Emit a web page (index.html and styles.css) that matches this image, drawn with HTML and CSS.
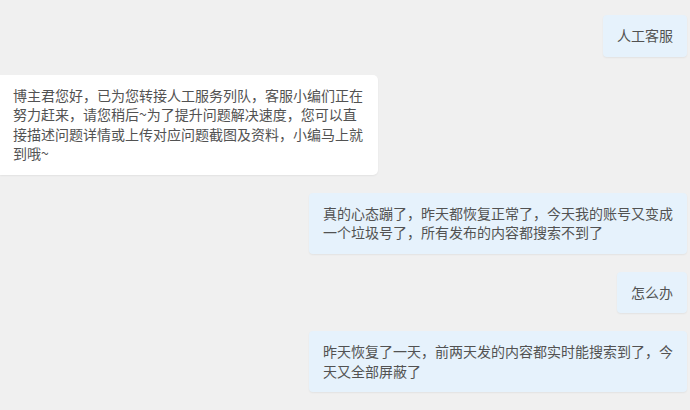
FILE: index.html
```html
<!DOCTYPE html>
<html lang="zh-CN">
<head>
    <meta charset="UTF-8">
    <meta name="viewport" content="width=device-width, initial-scale=1.0">
    <title>客服对话</title>
    <link rel="stylesheet" href="styles.css">
</head>
<body>
    <div class="chat">
        <div class="msg mine">人工客服</div>
        <div class="msg theirs">博主君您好，已为您转接人工服务列队，客服小编们正在努力赶来，请您稍后~为了提升问题解决速度，您可以直接描述问题详情或上传对应问题截图及资料，小编马上就到哦~</div>
        <div class="msg mine">真的心态蹦了，昨天都恢复正常了，今天我的账号又变成一个垃圾号了，所有发布的内容都搜索不到了</div>
        <div class="msg mine">怎么办</div>
        <div class="msg mine">昨天恢复了一天，前两天发的内容都实时能搜索到了，今天又全部屏蔽了</div>
    </div>
</body>
</html>
```

FILE: styles.css
```css
body {
    margin: 0;
    background-color: #f0f0f0;
    font-family: "Noto Sans CJK SC", sans-serif;
    height: 100vh;
    overflow: hidden;
}

.chat {
    display: flex;
    flex-direction: column;
    gap: 18px;
    padding: 15px 3px 0 0;
}

.msg {
    max-width: 350px;
    padding: 11px 14px;
    font-size: 14px;
    line-height: 19.5px;
    color: #525252;
    border-radius: 4px;
    box-shadow: 0 1px 2px rgba(0, 0, 0, 0.06);
}

.mine {
    align-self: flex-end;
    background-color: #e6f2fc;
}

.theirs {
    align-self: flex-start;
    background-color: #fff;
    padding: 11px 15px 11px 13px;
    border-radius: 0 5px 5px 0;
}
```
